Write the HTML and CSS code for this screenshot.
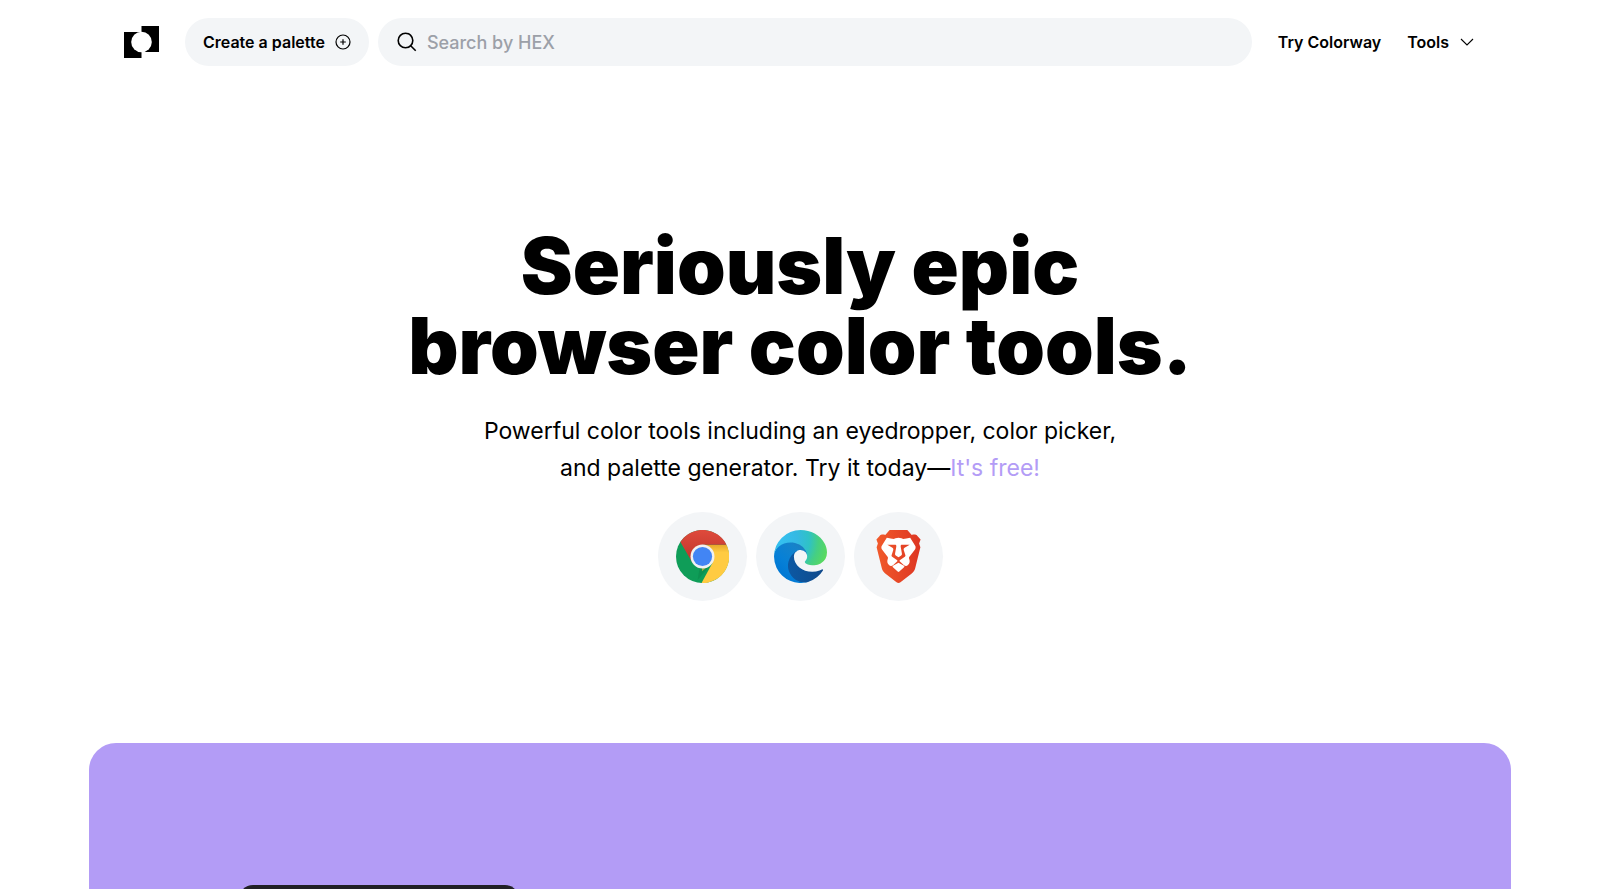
FILE: index.html
```html
<!DOCTYPE html>
<html lang="en">
<head>
  <meta charset="UTF-8" />
  <meta name="viewport" content="width=device-width, initial-scale=1.0"/>
  <title>Colorway</title>
  <link rel="stylesheet" href="styles.css">
</head>
<body>
  <header class="header">
    <a class="logo" href="#" aria-label="Home">
      <svg width="35" height="32" viewBox="0 0 35 32">
        <path d="M17.500 0H35v26H17.500v6H0V6h17.500z"/>
        <circle cx="17.500" cy="16" r="10.300" fill="#fff"/>
      </svg>
    </a>
    <button class="create" type="button">
      Create a palette
      <svg width="16" height="16" viewBox="0 0 16 16" fill="none" stroke="#000" stroke-width="1.200">
        <circle cx="8" cy="8" r="7"/>
        <path d="M8 5.200v5.600M5.200 8h5.600"/>
      </svg>
    </button>
    <label class="search">
      <svg width="20" height="20" viewBox="0 0 20 20" fill="none" stroke="#000" stroke-width="1.600">
        <circle cx="8.500" cy="8.500" r="7.300"/>
        <path d="M13.700 13.700l5 5"/>
      </svg>
      <input type="text" placeholder="Search by HEX" aria-label="Search by HEX">
    </label>
    <nav class="nav">
      <a href="#">Try Colorway</a>
      <button type="button">
        Tools
        <svg width="16" height="16" viewBox="0 0 16 16" fill="none" stroke="#000" stroke-width="1.100">
          <path d="M2 5l6 6 6-6"/>
        </svg>
      </button>
    </nav>
  </header>

  <main>
    <section class="hero">
      <h1>Seriously epic<br>browser color tools.</h1>
      <p>Powerful color tools including an eyedropper, color picker,<br>and palette generator. Try it today—<span class="free">It's free!</span></p>
      <div class="browsers">
        <a href="#" aria-label="Chrome">
          <svg width="53" height="53" viewBox="0 0 54 54">
            <defs>
              <linearGradient id="chromeRed" x1="0" y1="0" x2="0" y2="1">
                <stop offset="0" stop-color="#df4a3c"/>
                <stop offset="1" stop-color="#bd352b"/>
              </linearGradient>
              <linearGradient id="chromeYellow" x1="0" y1="0" x2="0" y2="1">
                <stop offset="0" stop-color="#e6a92a"/>
                <stop offset=".2" stop-color="#ffcb42"/>
              </linearGradient>
            </defs>
            <circle cx="27" cy="27" r="27" fill="#0f9d58"/>
            <path d="M27 27L26 54A27 27 0 0 0 51.400 15H27z" fill="url(#chromeYellow)"/>
            <path d="M37.400 33L26 54 18 49z" fill="#0f9d58"/>
            <path d="M37.400 33L24 39l-2 12z" fill="#0b7f47" opacity=".4"/>
            <path d="M4.500 12.200A27 27 0 0 1 51.400 15H27L16.600 33z" fill="url(#chromeRed)"/>
            <circle cx="27" cy="27" r="12.200" fill="#f1f1f1"/>
            <circle cx="27" cy="27" r="9.800" fill="#4285f4"/>
          </svg>
        </a>
        <a href="#" aria-label="Edge">
          <svg width="53" height="53" viewBox="0 0 256 256">
            <defs>
              <linearGradient id="edgeNavy" x1="63" y1="178" x2="241" y2="178" gradientUnits="userSpaceOnUse">
                <stop offset="0" stop-color="#0c59a4"/>
                <stop offset="1" stop-color="#114a8b"/>
              </linearGradient>
              <linearGradient id="edgeBlue" x1="157" y1="100" x2="46" y2="222" gradientUnits="userSpaceOnUse">
                <stop offset="0" stop-color="#1b7fc2"/>
                <stop offset=".16" stop-color="#1583cb"/>
                <stop offset=".67" stop-color="#0680d7"/>
                <stop offset="1" stop-color="#0078d4"/>
              </linearGradient>
              <radialGradient id="edgeGreen" cx="26" cy="48" r="250" gradientUnits="userSpaceOnUse">
                <stop offset="0" stop-color="#35c1f1"/>
                <stop offset=".35" stop-color="#34b9e3"/>
                <stop offset=".58" stop-color="#2fc2c5"/>
                <stop offset=".75" stop-color="#45cf83"/>
                <stop offset="1" stop-color="#5fdc55"/>
              </radialGradient>
            </defs>
            <path fill="url(#edgeNavy)" d="M231 190.500c-3.400 1.800-6.900 3.400-10.500 4.700a101.900 101.900 0 0 1-35.900 6.500c-47.300 0-88.500-32.500-88.500-74.300.1-11.400 6.400-21.900 16.400-27.300-42.800 1.800-53.800 46.400-53.800 72.500 0 73.900 68.100 81.400 82.800 81.400 7.900 0 19.800-2.300 27-4.600l1.300-.4a128.300 128.300 0 0 0 66.600-52.800 4 4 0 0 0-5.400-5.700z"/>
            <path fill="url(#edgeBlue)" d="M105.700 241.400a79.200 79.200 0 0 1-22.700-21.300 80.700 80.700 0 0 1 29.500-120c3.200-1.500 8.500-4.100 15.600-4a32.400 32.400 0 0 1 25.700 13 31.900 31.900 0 0 1 6.300 18.700c0-.2 24.500-79.600-80-79.600-43.900 0-80 41.700-80 78.200a130.200 130.200 0 0 0 12.100 56 128 128 0 0 0 156.400 67.100 75.500 75.500 0 0 1-62.800-8z"/>
            <path fill="url(#edgeGreen)" d="M152.300 148.900c-.9 1-3.400 2.500-3.400 5.600 0 2.600 1.700 5.200 4.800 7.300 14.300 10 41.400 8.600 41.500 8.600a59.600 59.600 0 0 0 30.300-8.300 61.400 61.400 0 0 0 30.400-52.900c.3-22.400-8-37.300-11.300-43.900C223.500 23.900 177.700 0 128 0A128 128 0 0 0 0 126.200c.5-36.500 36.800-66 80-66 3.500 0 23.500.3 42 10a72.600 72.600 0 0 1 30.900 29.300c6.100 10.600 7.200 24.100 7.200 29.500s-2.700 13.300-7.800 19.900z"/>
          </svg>
        </a>
        <a href="#" aria-label="Brave">
          <svg width="53" height="53" viewBox="0 0 54 54">
            <defs>
              <linearGradient id="braveRed" x1="0" y1="0" x2="1" y2="0">
                <stop offset="0" stop-color="#f15a2b"/>
                <stop offset="1" stop-color="#dd3623"/>
              </linearGradient>
            </defs>
            <path fill="url(#braveRed)" d="M18 0h18l4.500 5c2.500-.6 4.500-.4 6 1.300l3 3.400-1.500 4 1.300 4-5.300 21.300c-.7 2.600-1.700 4-3.800 5.500L29 53.300q-2 1.200-4 0L13.800 44.500c-2.100-1.500-3.100-2.900-3.800-5.500L4.700 17.700l1.300-4-1.500-4 3-3.400c1.500-1.700 3.500-1.900 6-1.300z"/>
            <g fill="#fff" transform="translate(3.500 0) scale(.87 1)">
              <path d="M34.500 9l6.200-1 6 8.300c.6 1 .4 2.500-.4 3.600l-6.500 7.300c-.7.900-.5 1.500-.2 2.300 1 2.400.6 4.300-1.200 6-1.700 1.500-3.300 1.500-5 .4l-4.700-3.700c-.7-.7-.5-1.200.2-1.700l5.500-3.300c.9-.6.9-1 .5-2l-1.700-4.500c-.4-1.300-.1-2 .9-2.500l6-3.200-8.300.1c-1.800-.2-2.500.4-2.200 1.900l1.400 7c.2 1.200-.1 1.800-1.200 2.200L27 27.800l-2.800-1.600c-1.100-.4-1.400-1-1.200-2.200l1.400-7c.3-1.500-.4-2.100-2.200-1.900l-8.300-.1 6 3.200c1 .5 1.300 1.200.9 2.500l-1.700 4.500c-.4 1-.4 1.400.5 2l5.500 3.300c.7.500.9 1 .2 1.700l-4.700 3.700c-1.700 1.100-3.300 1.100-5-.4-1.800-1.700-2.200-3.600-1.200-6 .3-.8.5-1.400-.2-2.300l-6.500-7.300c-.8-1.100-1-2.600-.4-3.600l6-8.300 6.200 1c1.500.3 2.600.1 4-.5 2.500-.9 4.500-.9 7 0 1.400.6 2.500.8 4 .5z"/>
              <path d="M27 33.300l6.400 3.200c.7.400.7 1 .1 1.500L28 42.300q-1 .8-2 0L20.500 38c-.6-.5-.6-1.100.1-1.500z"/>
            </g>
          </svg>
        </a>
      </div>
    </section>

    <section class="showcase">
      <div class="panel"></div>
    </section>
  </main>
</body>
</html>
```
FILE: styles.css
```css
* {
  box-sizing: border-box;
}
body {
  margin: 0;
  font-family: Inter, sans-serif;
  color: #000;
  background: #fff;
}
a {
  color: inherit;
  text-decoration: none;
}
button {
  display: flex;
  align-items: center;
  padding: 0;
  border: none;
  background: none;
  color: inherit;
  font: inherit;
  cursor: pointer;
}
svg {
  display: block;
  flex: none;
}
.header {
  display: flex;
  align-items: center;
  max-width: 1422px;
  margin: 0 auto;
  padding: 18px 36px 0 35px;
  font-size: 16px;
  font-weight: 600;
}
.logo {
  margin-right: 26px;
}
.create {
  height: 48px;
  padding: 0 18px;
  gap: 10px;
  margin-right: 9px;
  border-radius: 24px;
  background: #f3f5f7;
}
.search {
  display: flex;
  flex: 1;
  align-items: center;
  height: 48px;
  padding: 0 19px;
  gap: 10px;
  border-radius: 24px;
  background: #f3f5f7;
}
.search input {
  flex: 1;
  min-width: 0;
  padding: 0;
  border: none;
  outline: none;
  background: none;
  font: inherit;
  font-size: 18px;
}
.search input::placeholder {
  color: #9ca0a8;
  font-weight: 500;
}
.nav {
  display: flex;
  align-items: center;
  gap: 26px;
  margin-left: 26px;
}
.nav button {
  gap: 10px;
}
.hero {
  padding: 160px 24px 142px;
  text-align: center;
}
h1 {
  margin: 0;
  font-size: 78px;
  font-weight: 900;
  line-height: 80px;
}
.hero p {
  margin: 27px 0 0;
  font-size: 23px;
  line-height: 37px;
}
.free {
  color: #b39cf6;
}
.browsers {
  display: flex;
  justify-content: center;
  gap: 9px;
  margin-top: 25px;
}
.browsers a {
  padding: 18px;
  border-radius: 50%;
  background: #f3f5f7;
}
.showcase {
  max-width: 1422px;
  margin: 0 auto;
  padding: 142px 150px;
  border-radius: 27px 27px 0 0;
  background: #b39cf6;
}
.panel {
  width: 280px;
  height: 320px;
  border-radius: 14px;
  background: #212025;
}
```
